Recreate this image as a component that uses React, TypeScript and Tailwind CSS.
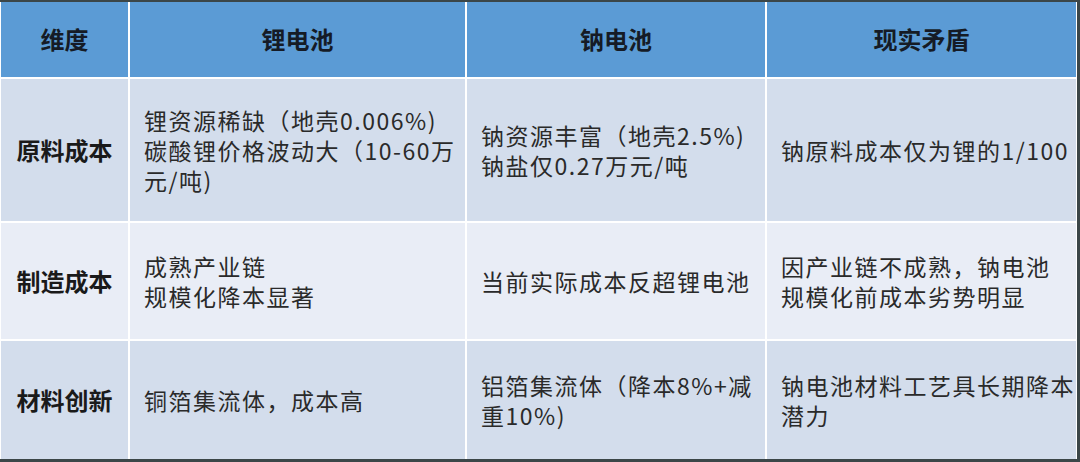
import React from 'react';

const font = { fontFamily: '"Noto Sans CJK SC", "Noto Sans", sans-serif' };

type Row = {
  label: string;
  li: string[];
  na: string[];
  note: string[];
  tone: 'dark' | 'light';
};

const rows: Row[] = [
  {
    label: '原料成本',
    li: ['锂资源稀缺（地壳0.006%)', '碳酸锂价格波动大（10-60万', '元/吨)'],
    na: ['钠资源丰富（地壳2.5%)', '钠盐仅0.27万元/吨'],
    note: ['钠原料成本仅为锂的1/100'],
    tone: 'dark',
  },
  {
    label: '制造成本',
    li: ['成熟产业链', '规模化降本显著'],
    na: ['当前实际成本反超锂电池'],
    note: ['因产业链不成熟，钠电池', '规模化前成本劣势明显'],
    tone: 'light',
  },
  {
    label: '材料创新',
    li: ['铜箔集流体，成本高'],
    na: ['铝箔集流体（降本8%+减', '重10%)'],
    note: ['钠电池材料工艺具长期降本', '潜力'],
    tone: 'dark',
  },
];

const Cell: React.FC<{ lines: string[]; bg: string }> = ({ lines, bg }) => (
  <div className={`${bg} flex flex-col justify-center pl-[14px] text-[23px] leading-[30px] tracking-[1.5px] text-[#2a2a2a] whitespace-nowrap overflow-hidden`}>
    {lines.map((l, i) => (
      <span key={i} className="h-[30px]">{l}</span>
    ))}
  </div>
);

const App: React.FC = () => {
  return (
    <div className="w-[1080px] h-[462px] bg-[#3b4648] pt-[2px] pr-[3px] pb-[3px]" style={font}>
      <div className="h-full bg-white pl-[1px] pr-[1px] grid grid-cols-[127px_335px_298px_1fr] grid-rows-[75px_142px_116px_1fr] gap-x-[2px] gap-y-[2px]">
        {/* header */}
        {['维度', '锂电池', '钠电池', '现实矛盾'].map((h) => (
          <div
            key={h}
            className="bg-[#5b9bd5] flex items-center justify-center text-[24px] font-bold text-[#151b26] pb-[2px]"
          >
            {h}
          </div>
        ))}

        {rows.map((r) => {
          const bg = r.tone === 'dark' ? 'bg-[#d3ddec]' : 'bg-[#e9edf6]';
          return (
            <React.Fragment key={r.label}>
              <div className={`${bg} flex items-center justify-center text-[24px] font-bold text-[#1a1a1a]`}>
                {r.label}
              </div>
              <Cell lines={r.li} bg={bg} />
              <Cell lines={r.na} bg={bg} />
              <Cell lines={r.note} bg={bg} />
            </React.Fragment>
          );
        })}
      </div>
    </div>
  );
};

export default App;
